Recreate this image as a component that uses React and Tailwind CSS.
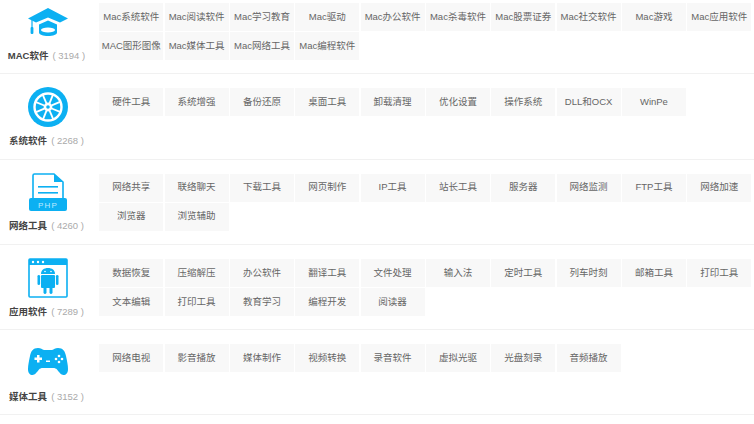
const font = 'font-["Liberation_Sans","Noto_Sans_CJK_SC",sans-serif]';

const CapIcon = () => (
  <svg width="40" height="28" viewBox="0 0 40 28" fill="#0cb0f2">
    <path d="M20 0L40 10.5 32 14.5 20 9.5 8 14.5 0 10.5z" />
    <path d="M11 16.5L20 12.5 29 16.5V24.5C29 26.5 25 28 20 28S11 26.5 11 24.5z" />
    <ellipse cx="20" cy="22" rx="7" ry="2.4" fill="#fff" />
    <rect x="3.4" y="12" width="1.2" height="8" />
    <rect x="2.6" y="19" width="2.8" height="7" rx="1" />
  </svg>
);

const WheelIcon = () => {
  const spokes = [0, 45, 90, 135, 180, 225, 270, 315];
  return (
    <svg width="40" height="40" viewBox="0 0 40 40">
      <circle cx="20" cy="20" r="20" fill="#0cb0f2" />
      <circle cx="20" cy="20" r="13.5" fill="none" stroke="#fff" strokeWidth="2.4" />
      {spokes.map((a) => (
        <line key={a} x1="20" y1="16" x2="20" y2="7" stroke="#fff" strokeWidth="1.8" transform={`rotate(${a + 22} 20 20)`} />
      ))}
      <circle cx="20" cy="20" r="4.4" fill="#fff" />
      <circle cx="20" cy="20" r="1.8" fill="#0cb0f2" />
    </svg>
  );
};

const PhpIcon = () => (
  <svg width="40" height="38" viewBox="0 0 40 38" fill="#0cb0f2">
    <path d="M5 26V2.500C5 1.500 5.600 1 6.500 1H26L35 9V26" fill="none" stroke="#0cb0f2" strokeWidth="1.6" />
    <path d="M26 1V9H35z" />
    <rect x="10" y="13" width="20" height="1.6" />
    <rect x="10" y="19" width="20" height="1.6" />
    <rect x="1" y="25" width="38" height="13" rx="2" />
    <text x="20" y="35" textAnchor="middle" fontSize="8" fontFamily="Liberation Sans" letterSpacing="1.2" fill="#bfeaff">PHP</text>
  </svg>
);

const AndroidIcon = () => (
  <svg width="40" height="40" viewBox="0 0 40 40" fill="#0cb0f2">
    <rect x="1" y="1" width="38" height="38" rx="1" fill="none" stroke="#0cb0f2" strokeWidth="1.6" />
    <rect x="1" y="1" width="38" height="6" />
    <circle cx="5" cy="4" r="1.2" fill="#fff" />
    <circle cx="10" cy="4" r="1.2" fill="#fff" />
    <circle cx="15" cy="4" r="1.2" fill="#fff" />
    <path d="M13 16C13 12 16 10 20 10S27 12 27 16z" />
    <rect x="13" y="17" width="14" height="13" rx="1" />
    <rect x="9.500" y="17" width="2.6" height="10" rx="1.3" />
    <rect x="27.900" y="17" width="2.6" height="10" rx="1.3" />
    <rect x="15.500" y="29" width="3" height="7" rx="1.4" />
    <rect x="21.500" y="29" width="3" height="7" rx="1.4" />
    <circle cx="17" cy="13.500" r=".8" fill="#fff" />
    <circle cx="23" cy="13.500" r=".8" fill="#fff" />
  </svg>
);

const PadIcon = () => (
  <svg width="40" height="27" viewBox="0 0 40 27" fill="#0cb0f2">
    <path d="M10 0C5 0 3 3 2 8 1 13 0 17 0 21 0 25 2 27 4.500 27 7 27 9 24 11 21.500 12 20.500 13 20 15 20H25C27 20 28 20.500 29 21.500 31 24 33 27 35.500 27 38 27 40 25 40 21 40 17 39 13 38 8 37 3 35 0 30 0 27 0 26 1.500 24 2H16C14 1.500 13 0 10 0z" />
    <path d="M9 7H11.500V9.500H14V12H11.500V14.500H9V12H6.500V9.500H9z" fill="#fff" />
    <rect x="18" y="12.500" width="4" height="1.500" fill="#fff" />
    <circle cx="31" cy="8" r="1.300" fill="#fff" />
    <circle cx="28" cy="11" r="1.300" fill="#fff" />
    <circle cx="34" cy="11" r="1.300" fill="#fff" />
    <circle cx="31" cy="14" r="1.300" fill="#fff" />
  </svg>
);

const sections = [
  {
    name: 'MAC软件', count: 3194, icon: <CapIcon />, iconClass: 'mt-[19px]',
    items: ['Mac系统软件', 'Mac阅读软件', 'Mac学习教育', 'Mac驱动', 'Mac办公软件', 'Mac杀毒软件', 'Mac股票证券', 'Mac社交软件', 'Mac游戏', 'Mac应用软件', 'MAC图形图像', 'Mac媒体工具', 'Mac网络工具', 'Mac编程软件'],
  },
  {
    name: '系统软件', count: 2268, icon: <WheelIcon />, iconClass: 'mt-[12.5px]',
    items: ['硬件工具', '系统增强', '备份还原', '桌面工具', '卸载清理', '优化设置', '操作系统', 'DLL和OCX', 'WinPe'],
  },
  {
    name: '网络工具', count: 4260, icon: <PhpIcon />, iconClass: 'mt-[13px]',
    items: ['网络共享', '联络聊天', '下载工具', '网页制作', 'IP工具', '站长工具', '服务器', '网络监测', 'FTP工具', '网络加速', '浏览器', '浏览辅助'],
  },
  {
    name: '应用软件', count: 7289, icon: <AndroidIcon />, iconClass: 'mt-[13.5px]',
    items: ['数据恢复', '压缩解压', '办公软件', '翻译工具', '文件处理', '输入法', '定时工具', '列车时刻', '邮箱工具', '打印工具', '文本编辑', '打印工具', '教育学习', '编程开发', '阅读器'],
  },
  {
    name: '媒体工具', count: 3152, icon: <PadIcon />, iconClass: 'mt-[18px]',
    items: ['网络电视', '影音播放', '媒体制作', '视频转换', '录音软件', '虚拟光驱', '光盘刻录', '音频播放'],
  },
];

const Section = ({ name, count, icon, iconClass, items }) => (
  <div className="flex h-[85.25px] border-b border-[#f1f1f1]">
    <div className="relative w-[99.3px] shrink-0">
      <div className={`flex w-[96.6px] justify-center ${iconClass}`}>{icon}</div>
      <div className="absolute left-0 top-[60px] flex h-[14px] w-[93px] items-center justify-center text-[9.5px] whitespace-nowrap">
        <span className="font-bold text-[#444]">{name}</span>
        <span className="ml-[4px] text-[#aaa]">( {count} )</span>
      </div>
    </div>
    <div className="flex flex-1 flex-wrap content-start gap-x-[1.33px] gap-y-[1px] pt-[14px]">
      {items.map((item, i) => (
        <div key={i} className="flex h-[28px] w-[64px] items-center justify-center bg-[#f8f8f8] text-[9.5px] whitespace-nowrap text-[#666]">
          {item}
        </div>
      ))}
    </div>
  </div>
);

export default function App() {
  return (
    <div className={`h-[424px] w-[754px] overflow-hidden bg-white ${font}`}>
      <div className="-mt-[11px]">
        {sections.map((s) => (
          <Section key={s.name} {...s} />
        ))}
      </div>
    </div>
  );
}
